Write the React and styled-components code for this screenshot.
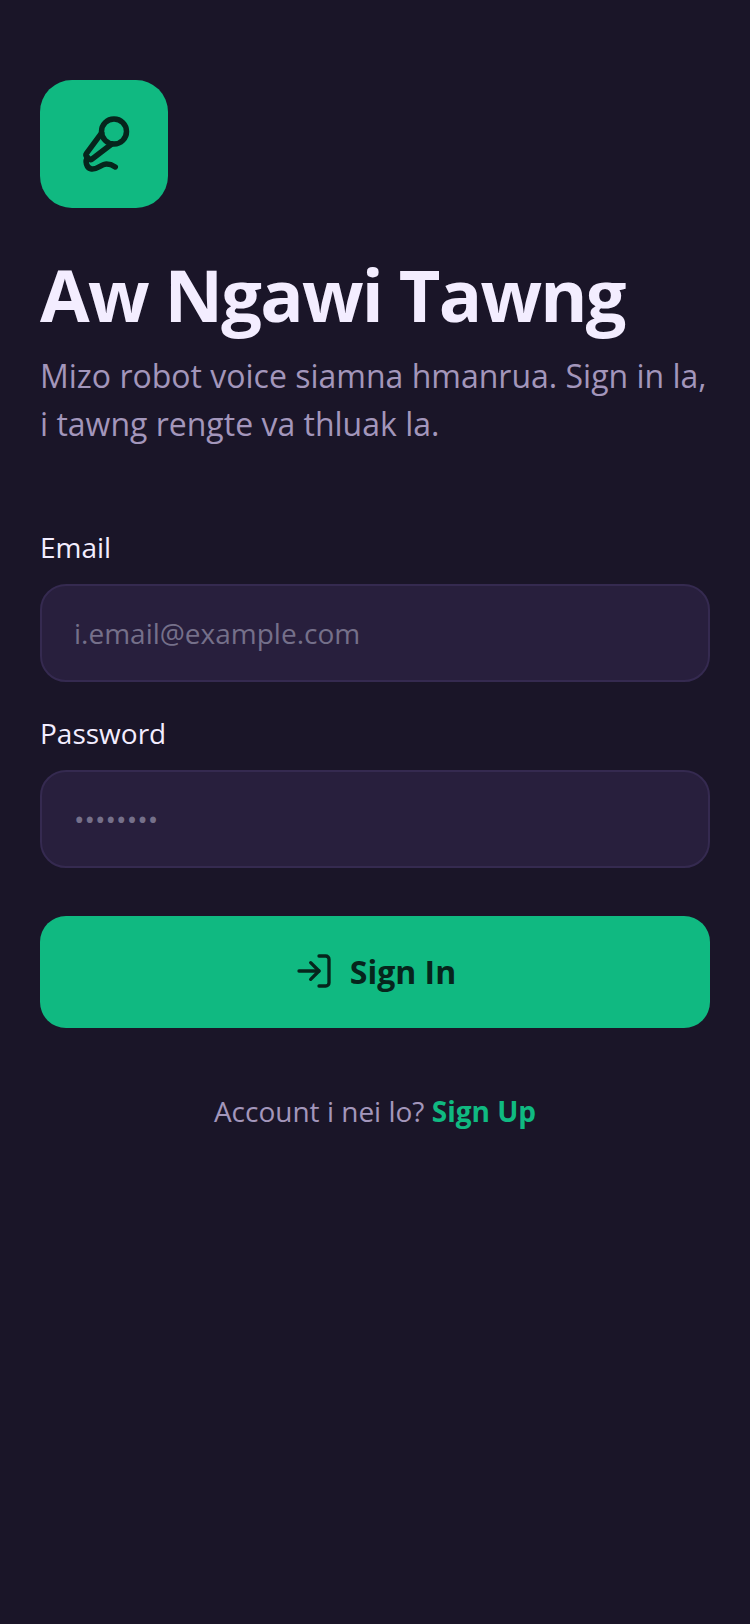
import styled, { createGlobalStyle } from "styled-components";
import { Mic2, LogIn } from "lucide-react";

const Global = createGlobalStyle`
  * { box-sizing: border-box; }
  html, body { margin: 0; padding: 0; background: #1a1528; }
  body { font-family: "Open Sans", sans-serif; }
`;

const Page = styled.div`
  width: 750px;
  min-height: 1624px;
  padding: 80px 40px 0;
  background: #1a1528;
`;

const LogoBox = styled.div`
  width: 128px;
  height: 128px;
  border-radius: 32px;
  background: #10b981;
  color: #06251c;
  display: flex;
  align-items: center;
  justify-content: center;
`;

const Title = styled.h1`
  margin: 46px 0 0;
  font-size: 72px;
  line-height: 80px;
  font-weight: 700;
  letter-spacing: -1.8px;
  color: #f3edff;
`;

const Subtitle = styled.p`
  margin: 18px 0 0;
  font-size: 32px;
  line-height: 48px;
  color: #a396bb;
`;

const Form = styled.form`
  margin-top: 79px;
  display: flex;
  flex-direction: column;
`;

const Label = styled.label`
  display: block;
  font-size: 28px;
  line-height: 40px;
  color: #f3edff;
  margin-bottom: 17px;
`;

const Input = styled.input`
  display: block;
  width: 100%;
  height: 98px;
  margin-bottom: 31px;
  padding: 0 32px;
  border: 2px solid #352a50;
  border-radius: 26px;
  background: #281f3d;
  font-family: inherit;
  font-size: 28px;
  color: #f3edff;

  &::placeholder {
    color: #75708a;
    opacity: 1;
  }
`;

const SubmitButton = styled.button`
  height: 112px;
  margin-top: 17px;
  padding: 0 0 2px;
  border: 0;
  border-radius: 26px;
  background: #10b981;
  color: #06251c;
  font-family: inherit;
  font-size: 32px;
  font-weight: 700;
  display: flex;
  align-items: center;
  justify-content: center;
  gap: 16px;
`;

const Footer = styled.p`
  margin: 63px 0 0;
  text-align: center;
  font-size: 28px;
  line-height: 40px;
  color: #a396bb;
`;

const FooterLink = styled.a`
  color: #10b981;
  font-weight: 700;
`;

export default function App() {
  return (
    <Page>
      <Global />
      <LogoBox>
        <Mic2 size={60} strokeWidth={2.2} />
      </LogoBox>
      <Title>Aw Ngawi Tawng</Title>
      <Subtitle>
        Mizo robot voice siamna hmanrua. Sign in la, i tawng rengte va thluak
        la.
      </Subtitle>
      <Form onSubmit={(e) => e.preventDefault()}>
        <Label>Email</Label>
        <Input type="email" placeholder="i.email@example.com" />
        <Label>Password</Label>
        <Input type="password" placeholder="••••••••" />
        <SubmitButton>
          <LogIn size={40} />
          Sign In
        </SubmitButton>
      </Form>
      <Footer>
        Account i nei lo? <FooterLink>Sign Up</FooterLink>
      </Footer>
    </Page>
  );
}
